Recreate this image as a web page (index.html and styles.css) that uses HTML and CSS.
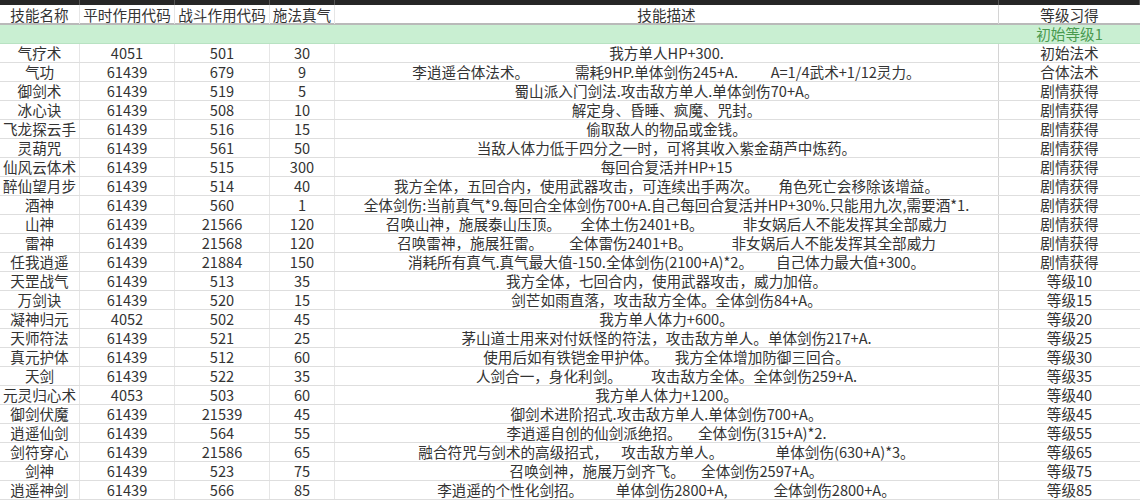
FILE: index.html
```html
<!DOCTYPE html>
<html lang="zh">
<head>
<meta charset="utf-8">
<link rel="stylesheet" href="styles.css">
</head>
<body>
<div class="sheet">
  <div class="colbar">
    <span></span><span></span><span></span><span></span><span></span><span></span>
  </div>
  <div class="row head">
    <div class="c">技能名称</div><div class="c">平时作用代码</div><div class="c">战斗作用代码</div><div class="c">施法真气</div><div class="c">技能描述</div><div class="c">等级习得</div>
  </div>
  <div class="row green">
    <div class="c"></div><div class="c"></div><div class="c"></div><div class="c"></div><div class="c"></div><div class="c gtxt">初始等级1</div>
  </div>
  <div class="row"><div class="c">气疗术</div><div class="c">4051</div><div class="c">501</div><div class="c">30</div><div class="c d">我方单人HP+300.</div><div class="c">初始法术</div></div>
  <div class="row"><div class="c">气功</div><div class="c">61439</div><div class="c">679</div><div class="c">9</div><div class="c d">李逍遥合体法术。              需耗9HP.单体剑伤245+A.          A=1/4武术+1/12灵力。</div><div class="c">合体法术</div></div>
  <div class="row"><div class="c">御剑术</div><div class="c">61439</div><div class="c">519</div><div class="c">5</div><div class="c d">蜀山派入门剑法.攻击敌方单人.单体剑伤70+A。</div><div class="c">剧情获得</div></div>
  <div class="row"><div class="c">冰心诀</div><div class="c">61439</div><div class="c">508</div><div class="c">10</div><div class="c d">解定身、昏睡、疯魔、咒封。</div><div class="c">剧情获得</div></div>
  <div class="row"><div class="c">飞龙探云手</div><div class="c">61439</div><div class="c">516</div><div class="c">15</div><div class="c d">偷取敌人的物品或金钱。</div><div class="c">剧情获得</div></div>
  <div class="row"><div class="c">灵葫咒</div><div class="c">61439</div><div class="c">561</div><div class="c">50</div><div class="c d">当敌人体力低于四分之一时，可将其收入紫金葫芦中炼药。</div><div class="c">剧情获得</div></div>
  <div class="row"><div class="c">仙风云体术</div><div class="c">61439</div><div class="c">515</div><div class="c">300</div><div class="c d">每回合复活并HP+15</div><div class="c">剧情获得</div></div>
  <div class="row"><div class="c">醉仙望月步</div><div class="c">61439</div><div class="c">514</div><div class="c">40</div><div class="c d">我方全体，五回合内，使用武器攻击，可连续出手两次。      角色死亡会移除该增益。</div><div class="c">剧情获得</div></div>
  <div class="row"><div class="c">酒神</div><div class="c">61439</div><div class="c">560</div><div class="c">1</div><div class="c d">全体剑伤:当前真气*9.每回合全体剑伤700+A.自己每回合复活并HP+30%.只能用九次,需要酒*1.</div><div class="c">剧情获得</div></div>
  <div class="row"><div class="c">山神</div><div class="c">61439</div><div class="c">21566</div><div class="c">120</div><div class="c d">召唤山神，施展泰山压顶。      全体土伤2401+B。            非女娲后人不能发挥其全部威力</div><div class="c">剧情获得</div></div>
  <div class="row"><div class="c">雷神</div><div class="c">61439</div><div class="c">21568</div><div class="c">120</div><div class="c d">召唤雷神，施展狂雷。        全体雷伤2401+B。            非女娲后人不能发挥其全部威力</div><div class="c">剧情获得</div></div>
  <div class="row"><div class="c">任我逍遥</div><div class="c">61439</div><div class="c">21884</div><div class="c">150</div><div class="c d">消耗所有真气.真气最大值-150.全体剑伤(2100+A)*2。       自己体力最大值+300。</div><div class="c">剧情获得</div></div>
  <div class="row"><div class="c">天罡战气</div><div class="c">61439</div><div class="c">513</div><div class="c">35</div><div class="c d">我方全体，七回合内，使用武器攻击，威力加倍。</div><div class="c">等级10</div></div>
  <div class="row"><div class="c">万剑诀</div><div class="c">61439</div><div class="c">520</div><div class="c">15</div><div class="c d">剑芒如雨直落，攻击敌方全体。全体剑伤84+A。</div><div class="c">等级15</div></div>
  <div class="row"><div class="c">凝神归元</div><div class="c">4052</div><div class="c">502</div><div class="c">45</div><div class="c d">我方单人体力+600。</div><div class="c">等级20</div></div>
  <div class="row"><div class="c">天师符法</div><div class="c">61439</div><div class="c">521</div><div class="c">25</div><div class="c d">茅山道士用来对付妖怪的符法，攻击敌方单人。单体剑伤217+A.</div><div class="c">等级25</div></div>
  <div class="row"><div class="c">真元护体</div><div class="c">61439</div><div class="c">512</div><div class="c">60</div><div class="c d">使用后如有铁铠金甲护体。     我方全体增加防御三回合。</div><div class="c">等级30</div></div>
  <div class="row"><div class="c">天剑</div><div class="c">61439</div><div class="c">522</div><div class="c">35</div><div class="c d">人剑合一，身化利剑。         攻击敌方全体。全体剑伤259+A.</div><div class="c">等级35</div></div>
  <div class="row"><div class="c">元灵归心术</div><div class="c">4053</div><div class="c">503</div><div class="c">60</div><div class="c d">我方单人体力+1200。</div><div class="c">等级40</div></div>
  <div class="row"><div class="c">御剑伏魔</div><div class="c">61439</div><div class="c">21539</div><div class="c">45</div><div class="c d">御剑术进阶招式.攻击敌方单人.单体剑伤700+A。</div><div class="c">等级45</div></div>
  <div class="row"><div class="c">逍遥仙剑</div><div class="c">61439</div><div class="c">564</div><div class="c">55</div><div class="c d">李逍遥自创的仙剑派绝招。     全体剑伤(315+A)*2.</div><div class="c">等级55</div></div>
  <div class="row"><div class="c">剑符穿心</div><div class="c">61439</div><div class="c">21586</div><div class="c">65</div><div class="c d">融合符咒与剑术的高级招式，    攻击敌方单人。                单体剑伤(630+A)*3。</div><div class="c">等级65</div></div>
  <div class="row"><div class="c">剑神</div><div class="c">61439</div><div class="c">523</div><div class="c">75</div><div class="c d">召唤剑神，施展万剑齐飞。     全体剑伤2597+A。</div><div class="c">等级75</div></div>
  <div class="row"><div class="c">逍遥神剑</div><div class="c">61439</div><div class="c">566</div><div class="c">85</div><div class="c d">李逍遥的个性化剑招。          单体剑伤2800+A,              全体剑伤2800+A。</div><div class="c">等级85</div></div>
</div>
</body>
</html>
```
FILE: styles.css
```css
html, body {
  margin: 0;
  padding: 0;
  background: #ffffff;
}
.sheet {
  width: 1140px;
  height: 500px;
  overflow: hidden;
  font-family: "Noto Sans CJK SC", "Noto Sans", sans-serif;
  font-size: 14.6px;
  color: #333333;
}
.colbar {
  height: 5px;
  background: #262626;
  display: grid;
  grid-template-columns: 80px 95px 95px 65px 664px 141px;
}
.colbar span {
  border-right: 1px solid #555;
}
.row {
  display: grid;
  grid-template-columns: 80px 95px 95px 65px 664px 141px;
  height: 19px;
  box-sizing: border-box;
  border-bottom: 1px solid #dedede;
}
.row.head {
  height: 20px;
  border-bottom: 2px solid #b9b9b9;
}
.row.green {
  background: #c9efd2;
  border-bottom: 1px solid #b8e2c2;
}
.c {
  box-sizing: border-box;
  border-right: 1px solid #e6e6e6;
  text-align: center;
  line-height: 18px;
  white-space: nowrap;
  overflow: visible;
}
.row.head .c {
  line-height: 19px;
}
.row.green .c {
  border-right-color: transparent;
}
.c.d {
  white-space: pre;
  display: flex;
  justify-content: center;
}
.c:last-child {
  border-right: none;
}
.c:nth-child(5) {
  border-right: 1px solid #d4d4d4;
}
.gtxt {
  color: #4a9a50;
}
```
